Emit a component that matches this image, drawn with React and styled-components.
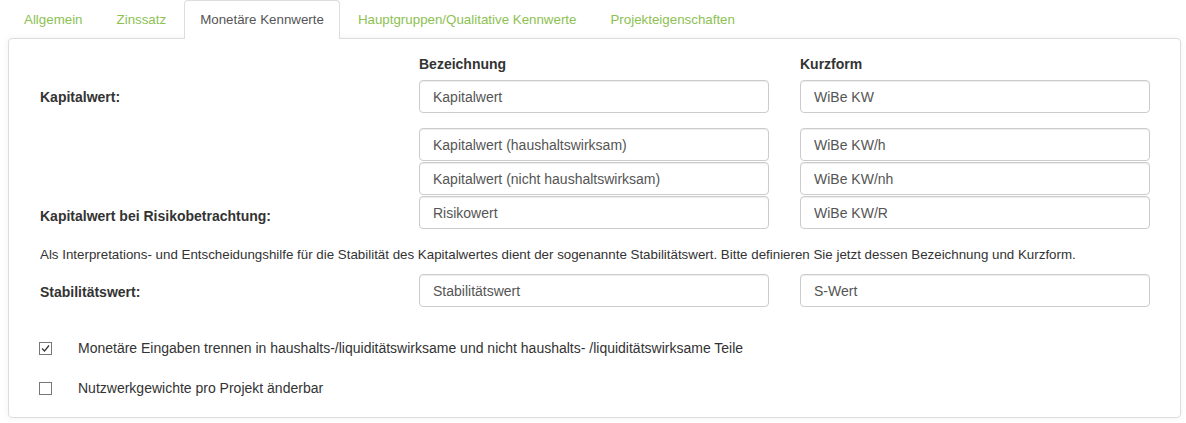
import React from 'react'
import styled, { createGlobalStyle } from 'styled-components'

const GlobalStyle = createGlobalStyle`
  body {
    margin: 0;
    background: #fff;
    font-family: "Liberation Sans", Arial, sans-serif;
    color: #333;
  }
`

const Page = styled.div`
  padding: 0 5px 4px 8px;
`

const TabBar = styled.ul`
  display: flex;
  list-style: none;
  margin: 0;
  padding: 0;
  font-size: 13.33px;
`

const Tab = styled.li`
  position: relative;
  z-index: 1;
  margin: 0 2px -1px 0;
  padding: 10px 15px 10px;
  line-height: 18px;
  border: 1px solid ${p => (p.$active ? '#ddd' : 'transparent')};
  border-bottom: none;
  border-radius: 4px 4px 0 0;
  background: ${p => (p.$active ? '#fff' : 'transparent')};
  color: ${p => (p.$active ? '#555' : '#8cc152')};
  cursor: pointer;
`

const Panel = styled.div`
  border: 1px solid #ddd;
  border-radius: 4px;
  box-shadow: 0 0 6px rgba(0, 0, 0, 0.06);
  padding: 16px 30px 20px 31px;
`

const Row = styled.div`
  display: grid;
  grid-template-columns: 348px 350px 350px;
  column-gap: 31px;
  align-items: ${p => p.$align || 'center'};
  margin-top: ${p => p.$top || 0}px;
`

const ColHead = styled.div`
  font-weight: bold;
  font-size: 14px;
  line-height: 18px;
`

const Label = styled.div`
  font-weight: bold;
  font-size: 14px;
  line-height: 18px;
  padding-top: ${p => p.$shift || 0}px;
  margin-bottom: ${p => p.$lift || 0}px;
`

const Stack = styled.div`
  display: flex;
  flex-direction: column;
  gap: 1px;
`

const Input = styled.input`
  box-sizing: border-box;
  width: 100%;
  height: 33px;
  padding: 0 13px;
  border: 1px solid #ccc;
  border-radius: 4px;
  box-shadow: inset 0 1px 1px rgba(0, 0, 0, 0.075);
  font-family: inherit;
  font-size: 14px;
  color: #555;
  background: #fff;
  outline: none;
`

const Hint = styled.p`
  margin: 17px 0 0;
  font-size: 13.33px;
  line-height: 18px;
`

const CheckRow = styled.label`
  display: flex;
  align-items: center;
  gap: 26px;
  margin-top: ${p => p.$top}px;
  font-size: 14px;
  line-height: 18px;
`

const Box = styled.span`
  box-sizing: border-box;
  display: inline-flex;
  align-items: center;
  justify-content: center;
  width: 13px;
  height: 13px;
  margin-left: -1px;
  border: 1px solid #777;
  background: #fff;
`

function Check({ checked }) {
  return (
    <Box>
      {checked && (
        <svg width="9" height="9" viewBox="0 0 9 9">
          <path d="M1 4.5 L3.5 7 L8 1.5" fill="none" stroke="#333" strokeWidth="1.2" />
        </svg>
      )}
    </Box>
  )
}

const tabs = [
  'Allgemein',
  'Zinssatz',
  'Monetäre Kennwerte',
  'Hauptgruppen/Qualitative Kennwerte',
  'Projekteigenschaften',
]

export default function App() {
  return (
    <Page>
      <GlobalStyle />
      <TabBar>
        {tabs.map(t => (
          <Tab key={t} $active={t === 'Monetäre Kennwerte'}>{t}</Tab>
        ))}
      </TabBar>
      <Panel>
        <Row>
          <div />
          <ColHead>Bezeichnung</ColHead>
          <ColHead>Kurzform</ColHead>
        </Row>
        <Row $top={7}>
          <Label>Kapitalwert:</Label>
          <Input readOnly defaultValue="Kapitalwert" />
          <Input readOnly defaultValue="WiBe KW" />
        </Row>
        <Row $top={15} $align="end">
          <Label $lift={4}>Kapitalwert bei Risikobetrachtung:</Label>
          <Stack>
            <Input readOnly defaultValue="Kapitalwert (haushaltswirksam)" />
            <Input readOnly defaultValue="Kapitalwert (nicht haushaltswirksam)" />
            <Input readOnly defaultValue="Risikowert" />
          </Stack>
          <Stack>
            <Input readOnly defaultValue="WiBe KW/h" />
            <Input readOnly defaultValue="WiBe KW/nh" />
            <Input readOnly defaultValue="WiBe KW/R" />
          </Stack>
        </Row>
        <Hint>
          Als Interpretations- und Entscheidungshilfe für die Stabilität des Kapitalwertes dient der
          sogenannte Stabilitätswert. Bitte definieren Sie jetzt dessen Bezeichnung und Kurzform.
        </Hint>
        <Row $top={10}>
          <Label $shift={3}>Stabilitätswert:</Label>
          <Input readOnly defaultValue="Stabilitätswert" />
          <Input readOnly defaultValue="S-Wert" />
        </Row>
        <CheckRow $top={32}>
          <Check checked />
          Monetäre Eingaben trennen in haushalts-/liquiditätswirksame und nicht haushalts- /liquiditätswirksame Teile
        </CheckRow>
        <CheckRow $top={22}>
          <Check />
          Nutzwerkgewichte pro Projekt änderbar
        </CheckRow>
      </Panel>
    </Page>
  )
}
